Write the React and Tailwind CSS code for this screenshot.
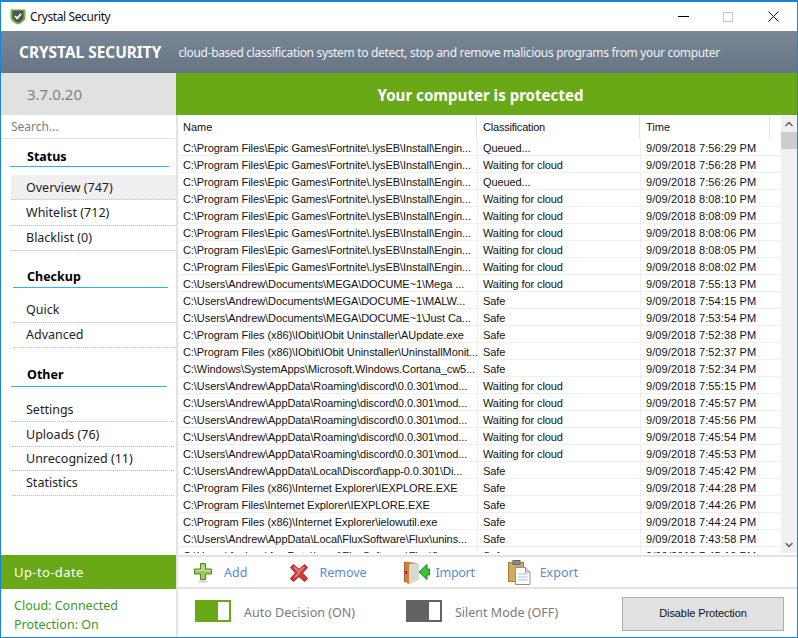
import { ChevronUp, ChevronDown } from "lucide-react";

const EPIC = "C:\\Program Files\\Epic Games\\Fortnite\\.lysEB\\Install\\Engin...";
const DISCORD = "C:\\Users\\Andrew\\AppData\\Roaming\\discord\\0.0.301\\mod...";
const MEGA = "C:\\Users\\Andrew\\Documents\\MEGA\\DOCUME~1\\";
const WAITING = "Waiting for cloud";

const rows = [
  [EPIC, "Queued...", "7:56:29"],
  [EPIC, WAITING, "7:56:28"],
  [EPIC, "Queued...", "7:56:26"],
  [EPIC, WAITING, "8:08:10"],
  [EPIC, WAITING, "8:08:09"],
  [EPIC, WAITING, "8:08:06"],
  [EPIC, WAITING, "8:08:05"],
  [EPIC, WAITING, "8:08:02"],
  [MEGA + "Mega ...", WAITING, "7:55:13"],
  [MEGA + "MALW...", "Safe", "7:54:15"],
  [MEGA + "Just Ca...", "Safe", "7:53:54"],
  ["C:\\Program Files (x86)\\IObit\\IObit Uninstaller\\AUpdate.exe", "Safe", "7:52:38"],
  ["C:\\Program Files (x86)\\IObit\\IObit Uninstaller\\UninstallMonit...", "Safe", "7:52:37"],
  ["C:\\Windows\\SystemApps\\Microsoft.Windows.Cortana_cw5...", "Safe", "7:52:34"],
  [DISCORD, WAITING, "7:55:15"],
  [DISCORD, WAITING, "7:45:57"],
  [DISCORD, WAITING, "7:45:56"],
  [DISCORD, WAITING, "7:45:54"],
  [DISCORD, WAITING, "7:45:53"],
  ["C:\\Users\\Andrew\\AppData\\Local\\Discord\\app-0.0.301\\Di...", "Safe", "7:45:42"],
  ["C:\\Program Files (x86)\\Internet Explorer\\IEXPLORE.EXE", "Safe", "7:44:28"],
  ["C:\\Program Files\\Internet Explorer\\IEXPLORE.EXE", "Safe", "7:44:26"],
  ["C:\\Program Files (x86)\\Internet Explorer\\ielowutil.exe", "Safe", "7:44:24"],
  ["C:\\Users\\Andrew\\AppData\\Local\\FluxSoftware\\Flux\\unins...", "Safe", "7:43:58"],
  ["C:\\Users\\Andrew\\AppData\\Local\\FluxSoftware\\Flux\\flu...", "Safe", "7:45:10"],
];

const ShieldIcon = () => (
  <svg width="16" height="17" viewBox="0 0 16 17">
    <path d="M0.500 1.500h15v8c0 3-3.500 5.500-7.500 7-4-1.500-7.500-4-7.500-7z" fill="#6fbf3a" />
    <path d="M2.500 2.500h11v6.800c0 2.300-2.700 4.200-5.500 5.400-2.800-1.200-5.500-3.100-5.500-5.400z" fill="#4d5659" />
    <path d="M5 8l2.200 2.400 3.800-4.600" fill="none" stroke="#fff" strokeWidth="1.800" />
  </svg>
);

const AddIcon = () => (
  <svg width="18" height="20" viewBox="0 0 18 20">
    <ellipse cx="9" cy="18.500" rx="5" ry="1.200" fill="#d5d5d5" />
    <path d="M6.500 0.500h5v5.500h6v5h-6v5.500h-5v-5.500h-6v-5h6z" fill="#9ccc5f" stroke="#55851f" />
    <path d="M8 2v5.500h-6M10 2v5.500h6" fill="none" stroke="#cfe9ab" />
  </svg>
);

const RemoveIcon = () => (
  <svg width="18" height="18" viewBox="0 0 18 18">
    <path d="M3.500 0.500l5.500 5 5.500-5 3 3-5 5.500 5 5.500-3 3-5.500-5-5.500 5-3-3 5-5.500-5-5.500z" fill="#cf3a3a" stroke="#a81c1c" />
    <path d="M4 3l5 5 5-5M5 13l4-4" fill="none" stroke="#e88e8e" strokeWidth="1.500" />
  </svg>
);

const ImportIcon = () => (
  <svg width="26" height="25" viewBox="0 0 26 25">
    <path d="M0 2h4v20h-4z" fill="#a85a22" />
    <path d="M1 1.500l12 1.500v17l-8 4-4-2z" fill="#d9793a" />
    <path d="M5 4l10-1v17l-10 4z" fill="#d7d9d6" />
    <path d="M15 12l8-7.500v4.500h2.500v6h-2.500v4.500z" fill="#3cc33c" stroke="#128a12" />
    <rect x="1.500" y="11" width="1.500" height="3" fill="#5f3312" />
  </svg>
);

const ExportIcon = () => (
  <svg width="23" height="25" viewBox="0 0 23 25">
    <rect x="0.500" y="2.500" width="15" height="19" fill="#d3a95a" stroke="#a67c34" />
    <rect x="5" y="0.500" width="7" height="4" fill="#8d8d8d" stroke="#666" />
    <path d="M7.500 7.500h10l4.500 4.500v12.500h-14.500z" fill="#fbfbfb" stroke="#8f8f8f" />
    <path d="M17.500 7.500v4.500h4.500" fill="#ddd" stroke="#8f8f8f" />
    <path d="M10 14h9.500M10 17h9.500M10 20h9.500" stroke="#a9bfd6" />
  </svg>
);

const NavItem = ({ label, className }) => (
  <div className={`flex items-center border-b border-dotted border-[#b9b9b9] text-[12.500px] text-[#222] ${className}`}>
    {label}
  </div>
);

const SectionTitle = ({ children, className }) => (
  <div className={`h-[20px] leading-[22px] pl-[26px] text-[12.500px] font-bold text-black ${className}`}>{children}</div>
);

const ToolButton = ({ icon, label, className, labelClass }) => (
  <div className={`flex items-center ${className}`}>
    {icon}
    <span className={`pt-[2px] text-[12.500px] text-[#5a8cc8] ${labelClass}`}>{label}</span>
  </div>
);

const App = () => {
  return (
    <div className="w-[798px] h-[638px] flex flex-col bg-white border border-t-2 border-[#1883d7] font-['Noto_Sans',sans-serif] overflow-hidden">
      {/* title bar */}
      <div className="h-[29px] flex items-center shrink-0">
        <div className="ml-[9px] mr-[4px] flex"><ShieldIcon /></div>
        <span className="text-[12px] tracking-[-0.4px] text-[#111]">Crystal Security</span>
        <div className="ml-auto flex items-center">
          <div className="w-[11px] h-px bg-black mr-[34px]" />
          <div className="w-[10px] h-[10px] border border-[#c4c4c4] mr-[35px]" />
          <svg width="11" height="11" viewBox="0 0 11 11" className="mr-[18px]">
            <path d="M0.500 0.500l10 10M10.500 0.500l-10 10" stroke="#111" fill="none" />
          </svg>
        </div>
      </div>

      {/* header */}
      <div className="h-[42px] shrink-0 flex items-center pt-[1px] bg-gradient-to-b from-[#7a8797] to-[#667585] text-white">
        <span className="ml-[18px] text-[15.400px] font-bold">CRYSTAL SECURITY</span>
        <span className="ml-[17px] text-[12px] tracking-[-0.33px] text-[#f0f2f4]">cloud-based classification system to detect, stop and remove malicious programs from your computer</span>
      </div>

      {/* version and status */}
      <div className="h-[42px] shrink-0 flex">
        <div className="w-[175px] bg-[#e1e1e1] flex items-center pl-[26px] pt-[1px] text-[15px] text-[#808080]">3.7.0.20</div>
        <div className="flex-1 bg-[#69a918] flex items-center justify-center pt-[2px] pr-[12px] text-[15.100px] font-bold text-white">Your computer is protected</div>
      </div>

      <div className="flex-1 flex min-h-0">
        {/* sidebar */}
        <div className="w-[175px] shrink-0 flex flex-col">
          <div className="h-[24px] flex items-center pl-[10px] border-b border-[#e3e3e3] mr-[1px] text-[12px] text-[#808080]">Search...</div>
          <div className="flex-1 flex flex-col">
            <SectionTitle className="mt-[7px]">Status</SectionTitle>
            <div className="ml-[9px] w-[159px] h-px bg-[#27b8e6]" />
            <div className="mt-[8px] ml-[10px] flex flex-col">
              <NavItem label="Overview (747)" className="h-[25px] pl-[15px] pt-[2px] bg-[#efefef]" />
              <NavItem label="Whitelist (712)" className="h-[26px] pl-[15px] pt-[2px]" />
              <NavItem label="Blacklist (0)" className="h-[25px] pl-[15px]" />
            </div>
            <SectionTitle className="mt-[15px]">Checkup</SectionTitle>
            <div className="mt-[1px] ml-[12px] w-[155px] h-px bg-[#27b8e6]" />
            <div className="mt-[9px] ml-[12px] flex flex-col">
              <NavItem label="Quick" className="h-[26px] pl-[13px] pt-[2px]" />
              <NavItem label="Advanced" className="h-[25px] pl-[13px]" />
            </div>
            <SectionTitle className="mt-[16px]">Other</SectionTitle>
            <div className="mt-[2px] ml-[10px] w-[156px] h-px bg-[#27b8e6]" />
            <div className="mt-[10px] ml-[11px] mr-[2px] flex flex-col">
              <NavItem label="Settings" className="h-[25px] pl-[14px] pt-[2px]" />
              <NavItem label="Uploads (76)" className="h-[25px] pl-[14px] pt-[2px]" />
              <NavItem label="Unrecognized (11)" className="h-[24px] pl-[14px] pt-[2px]" />
              <NavItem label="Statistics" className="h-[25px] pl-[14px]" />
            </div>
          </div>
          <div className="h-[34px] bg-[#69a918] flex items-center pl-[13px] pt-[1px] text-[13px] tracking-[0.4px] text-white">Up-to-date</div>
          <div className="h-[48px] flex flex-col pl-[13px] pt-[7px] text-[12.500px] leading-[19px] text-[#3a9a1a]">
            <span>Cloud: Connected</span>
            <span>Protection: On</span>
          </div>
        </div>

        {/* right pane */}
        <div className="flex-1 flex flex-col border-l-2 border-[#e3e3e3] min-w-0">
          <div className="h-[440px] shrink-0">
            <div className="h-[438px] flex font-['Liberation_Sans',sans-serif] text-[11px] text-[#111] overflow-hidden">
              <div className="flex-1 flex flex-col min-w-0">
                <div className="h-[24px] shrink-0 flex items-center">
                  <div className="w-[299px] pl-[5px] h-full flex items-center border-r border-[#e5e5e5]">Name</div>
                  <div className="w-[163px] pl-[6px] h-full flex items-center border-r border-[#e5e5e5] tracking-[-0.2px]">Classification</div>
                  <div className="w-[130px] pl-[6px] h-full flex items-center border-r border-[#e5e5e5]">Time</div>
                </div>
                {rows.map((row, i) => (
                  <div key={i} className="h-[17px] shrink-0 flex border-b border-[#efefef]">
                    <div className="w-[300px] pl-[5px] pt-[3px] leading-[13px] border-r border-[#efefef] tracking-[-0.07px] whitespace-nowrap">{row[0]}</div>
                    <div className="w-[163px] pl-[5px] pt-[3px] leading-[13px] border-r border-[#efefef] tracking-[-0.1px]">{row[1]}</div>
                    <div className="pl-[5px] pt-[3px] leading-[13px] tracking-[0.1px] whitespace-nowrap">9/09/2018 {row[2]} PM</div>
                  </div>
                ))}
              </div>
              {/* scrollbar */}
              <div className="w-[16px] shrink-0 bg-[#f0f0f0] flex flex-col items-center">
                <div className="h-[17px] flex items-center justify-center"><ChevronUp size={12} strokeWidth={3} color="#606060" /></div>
                <div className="w-full h-[17px] bg-[#cdcdcd]" />
                <div className="flex-1" />
                <div className="h-[17px] flex items-center justify-center"><ChevronDown size={12} strokeWidth={3} color="#606060" /></div>
              </div>
            </div>
          </div>

          {/* toolbar */}
          <div className="h-[34px] shrink-0 flex items-center pt-[1px] border-t-2 border-b-2 border-[#e3e3e3]">
            <ToolButton icon={<AddIcon />} label="Add" className="ml-[16px]" labelClass="ml-[12px]" />
            <ToolButton icon={<RemoveIcon />} label="Remove" className="ml-[43px]" labelClass="ml-[11px]" />
            <ToolButton icon={<ImportIcon />} label="Import" className="ml-[37px]" labelClass="ml-[6px] tracking-[-0.3px]" />
            <ToolButton icon={<ExportIcon />} label="Export" className="ml-[33px]" labelClass="ml-[9px]" />
          </div>

          {/* bottom controls */}
          <div className="flex-1 flex items-center pl-[17px]">
            <div className="w-[36px] h-[22px] mb-[4px] border-2 border-[#69a918] flex">
              <div className="w-[21px] bg-[#69a918]" />
            </div>
            <span className="ml-[13px] text-[12.500px] text-[#7a7a7a]">Auto Decision (ON)</span>
            <div className="ml-[51px] w-[36px] h-[22px] mb-[4px] border-2 border-[#636363] flex">
              <div className="w-[21px] bg-[#636363]" />
            </div>
            <span className="ml-[13px] text-[12.500px] text-[#7a7a7a]">Silent Mode (OFF)</span>
            <div className="ml-auto mr-[13px] mt-[1px] w-[162px] h-[34px] bg-[#e1e1e1] border border-[#adadad] flex items-center justify-center font-['Liberation_Sans',sans-serif] text-[11px] tracking-[-0.1px] text-[#111]">Disable Protection</div>
          </div>
        </div>
      </div>
    </div>
  );
};

export default App;
